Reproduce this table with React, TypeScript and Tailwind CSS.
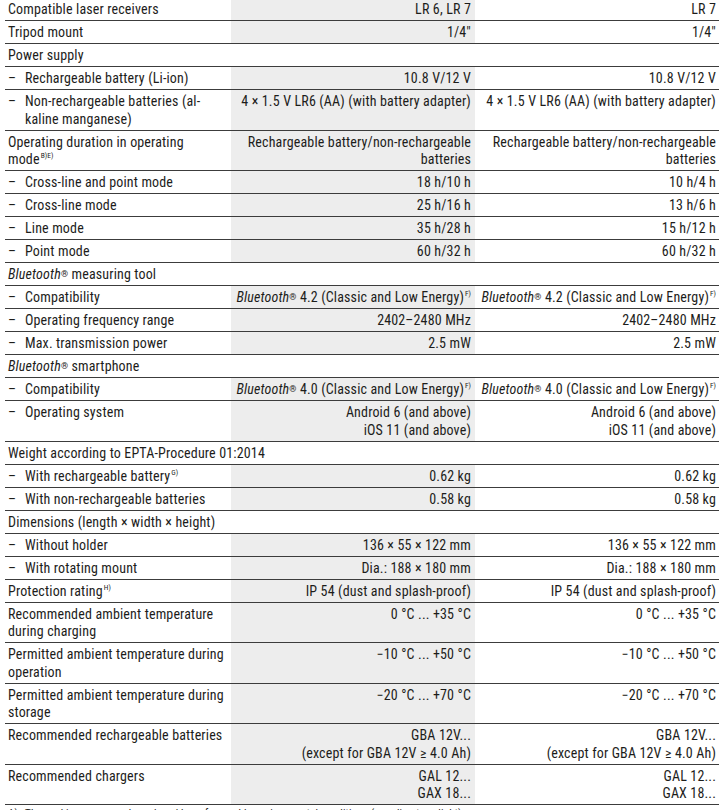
import type { ReactNode } from 'react';

type Row = { label: ReactNode; sub?: boolean; c2?: ReactNode; c3?: ReactNode };

const Sup = ({ children }: { children: ReactNode }) => (
  <sup className="text-[7.5px] leading-[0] top-[-6px] ml-[1px] tracking-normal">{children}</sup>
);

const BT = (
  <>
    <i>Bluetooth</i>
    <span className="text-[9px] leading-[0] relative top-[-2px]">®</span>
  </>
);

const ROWS: Row[] = [
  { label: 'Compatible laser receivers', c2: 'LR 6, LR 7', c3: 'LR 7' },
  { label: 'Tripod mount', c2: '1/4"', c3: '1/4"' },
  { label: 'Power supply' },
  { label: 'Rechargeable battery (Li-ion)', sub: true, c2: '10.8 V/12 V', c3: '10.8 V/12 V' },
  {
    label: <>Non-rechargeable batteries (al-<br />kaline manganese)</>,
    sub: true,
    c2: '4 × 1.5 V LR6 (AA) (with battery adapter)',
    c3: '4 × 1.5 V LR6 (AA) (with battery adapter)',
  },
  {
    label: <>Operating duration in operating<br />mode<Sup>B)E)</Sup></>,
    c2: <>Rechargeable battery/non-rechargeable<br />batteries</>,
    c3: <>Rechargeable battery/non-rechargeable<br />batteries</>,
  },
  { label: 'Cross-line and point mode', sub: true, c2: '18 h/10 h', c3: '10 h/4 h' },
  { label: 'Cross-line mode', sub: true, c2: '25 h/16 h', c3: '13 h/6 h' },
  { label: 'Line mode', sub: true, c2: '35 h/28 h', c3: '15 h/12 h' },
  { label: 'Point mode', sub: true, c2: '60 h/32 h', c3: '60 h/32 h' },
  { label: <>{BT} measuring tool</> },
  {
    label: 'Compatibility',
    sub: true,
    c2: <>{BT} 4.2 (Classic and Low Energy)<Sup>F)</Sup></>,
    c3: <>{BT} 4.2 (Classic and Low Energy)<Sup>F)</Sup></>,
  },
  { label: 'Operating frequency range', sub: true, c2: '2402–2480 MHz', c3: '2402–2480 MHz' },
  { label: 'Max. transmission power', sub: true, c2: '2.5 mW', c3: '2.5 mW' },
  { label: <>{BT} smartphone</> },
  {
    label: 'Compatibility',
    sub: true,
    c2: <>{BT} 4.0 (Classic and Low Energy)<Sup>F)</Sup></>,
    c3: <>{BT} 4.0 (Classic and Low Energy)<Sup>F)</Sup></>,
  },
  {
    label: 'Operating system',
    sub: true,
    c2: <>Android 6 (and above)<br />iOS 11 (and above)</>,
    c3: <>Android 6 (and above)<br />iOS 11 (and above)</>,
  },
  { label: 'Weight according to EPTA-Procedure 01:2014' },
  { label: <>With rechargeable battery<Sup>G)</Sup></>, sub: true, c2: '0.62 kg', c3: '0.62 kg' },
  { label: 'With non-rechargeable batteries', sub: true, c2: '0.58 kg', c3: '0.58 kg' },
  { label: 'Dimensions (length × width × height)' },
  { label: 'Without holder', sub: true, c2: '136 × 55 × 122 mm', c3: '136 × 55 × 122 mm' },
  { label: 'With rotating mount', sub: true, c2: 'Dia.: 188 × 180 mm', c3: 'Dia.: 188 × 180 mm' },
  { label: <>Protection rating<Sup>H)</Sup></>, c2: 'IP 54 (dust and splash-proof)', c3: 'IP 54 (dust and splash-proof)' },
  {
    label: <>Recommended ambient temperature<br />during charging</>,
    c2: '0 °C ... +35 °C',
    c3: '0 °C ... +35 °C',
  },
  {
    label: <>Permitted ambient temperature during<br />operation</>,
    c2: '−10 °C ... +50 °C',
    c3: '−10 °C ... +50 °C',
  },
  {
    label: <>Permitted ambient temperature during<br />storage</>,
    c2: '−20 °C ... +70 °C',
    c3: '−20 °C ... +70 °C',
  },
  {
    label: 'Recommended rechargeable batteries',
    c2: <>GBA 12V...<br />(except for GBA 12V ≥ 4.0 Ah)</>,
    c3: <>GBA 12V...<br />(except for GBA 12V ≥ 4.0 Ah)</>,
  },
  {
    label: 'Recommended chargers',
    c2: <>GAL 12...<br />GAX 18...</>,
    c3: <>GAL 12...<br />GAX 18...</>,
  },
];

const cell = 'pt-[3px] pb-[1.5px] whitespace-nowrap';

export default function App() {
  return (
    <div className="h-[810px] overflow-hidden bg-white font-['Roboto',sans-serif] font-stretch-condensed text-[14px] leading-[17.5px] tracking-[0.15px] text-[#1d1d1b]">
      <div className="-mt-[2px] ml-[5px] w-[714px]">
        {ROWS.map((r, i) =>
          r.c2 === undefined ? (
            // section header spans all three columns
            <div key={i} className={`border-b border-[#3c3c3c] pl-[3px] ${cell}`}>
              {r.label}
            </div>
          ) : (
            <div key={i} className="grid grid-cols-[226px_244px_244px] border-b border-[#3c3c3c]">
              <div className={`flex pl-[3px] ${cell}`}>
                {r.sub && <span className="w-[17px] shrink-0">–</span>}
                <span>{r.label}</span>
              </div>
              <div className={`bg-[#ededed] pr-[4px] text-right ${cell}`}>{r.c2}</div>
              <div className={`pr-[3px] text-right ${cell}`}>{r.c3}</div>
            </div>
          )
        )}
        <div className="flex pl-[3px] pt-[2px] text-[11px] leading-[14px]">
          <span className="w-[17px] shrink-0">A)</span>
          <span>The working range can be reduced by unfavourable environmental conditions (e.g. direct sunlight).</span>
        </div>
      </div>
    </div>
  );
}
